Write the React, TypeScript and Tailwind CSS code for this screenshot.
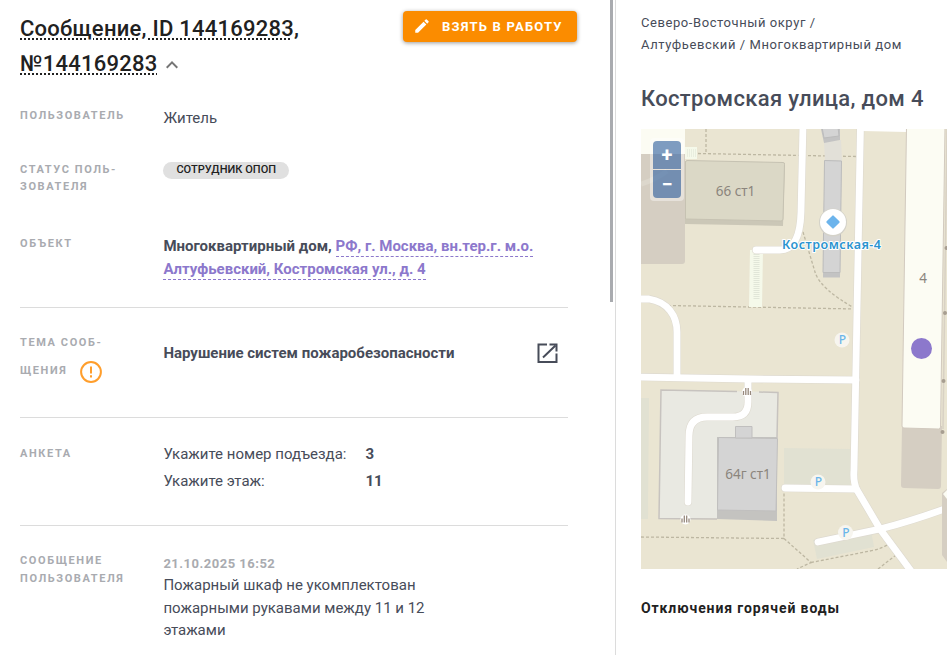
import React from 'react';
import { MdEdit, MdKeyboardArrowUp } from 'react-icons/md';

const Label: React.FC<{ className?: string; children: React.ReactNode }> = ({
  className = 'leading-[17.5px]',
  children,
}) => (
  <div
    className={`w-[143.4px] shrink-0 text-[11px] font-bold uppercase tracking-[1.6px] text-[#a9abb0] ${className}`}
  >
    {children}
  </div>
);

const WarningIcon: React.FC<{ className?: string }> = ({ className }) => (
  <svg viewBox="0 0 22 22" fill="none" stroke="currentColor" className={className}>
    <circle cx="11" cy="11" r="9.9" strokeWidth="2" />
    <path d="M11 5.5V12.5M11 14.2V16.4" strokeWidth="2" />
  </svg>
);

const OpenIcon: React.FC<{ className?: string }> = ({ className }) => (
  <svg viewBox="0 0 21 21" fill="none" stroke="currentColor" strokeWidth="2" className={className}>
    <path d="M10 1.5H1.5V19H19.5V10.5M6 14.5L18.5 2.5" />
    <path d="M12.5 1.5H19.5V8.5" />
  </svg>
);

const Parking: React.FC<{ x: number; y: number }> = ({ x, y }) => (
  <g>
    <circle cx={x} cy={y} r="7.5" fill="#f7f5ef" />
    <text x={x + 0.5} y={y + 4} textAnchor="middle" fontSize="12" fontWeight="500" fill="#6ab5ea">P</text>
  </g>
);

const Gate: React.FC<{ x: number; y: number }> = ({ x, y }) => (
  <g>
    <circle cx={x} cy={y} r="5" fill="#fff" />
    <path
      d={`M${x - 3.5} ${y - 1}v4M${x - 1.2} ${y - 4}v7M${x + 1.2} ${y - 4}v7M${x + 3.5} ${y - 1}v4`}
      stroke="#97897d"
      strokeWidth="1.3"
    />
  </g>
);

const roads = [
  'M803 125L801 212Q800 250 780 250H756',
  'M860.5 125L854 470Q853 482 857 490L880 529L914 575',
  'M636 299H649C668 302 677 316 677 332V377',
  'M636 377L750 379L856 380',
  'M748 380V402Q748 417 733 417H707Q689 417 689 436L688 502',
  'M785 488L856 489',
  'M818 542L880 529Q912 521 950 507',
];

const paths = [
  'M706 129V153',
  'M698 153.5L856 156.5',
  'M803 232L815 272Q820 289 856 309',
  'M668 305.5L856 309',
  'M641 537L784 538.5V492',
  'M784 538.5L811 562.5L797 569',
  'M811 562.5L870 551Q882 549 890 543',
  'M878 569L896 555',
];

const CityMap: React.FC = () => (
  <svg
    viewBox="641 129 306 440"
    className="block h-[440px] w-[306px]"
    fontFamily="'Noto Sans', sans-serif"
  >
    <rect x="641" y="129" width="306" height="440" fill="#eae5d2" />
    <rect x="641" y="129" width="44" height="26" fill="#fcfcf3" />
    <path d="M641 154H685V261Q685 264 682 264H641Z" fill="#d5cec2" />
    <path d="M641 184Q655 180 667 171" fill="none" stroke="#dcd7cc" strokeWidth="5" />
    <path d="M641 398H649L648 519H641Z" fill="#e1e1d2" />
    <path d="M784 448L850 449V487H784Z" fill="#e1e1d2" />
    <path d="M813 540L817 559L874 547L871 530Z" fill="#e1e1d2" />

    {/* fenced yard */}
    <path d="M661 390L778 392L776 519L659 518Z" fill="#e9e9e2" />
    <path
      d="M737 391.5L661 390L659 518.5L717 519M759 392L778 392.5L777 438"
      fill="none"
      stroke="#c7c3bf"
      strokeWidth="1.5"
    />

    {paths.map((d) => (
      <path key={d} d={d} fill="none" stroke="#bdb7a2" strokeWidth="1.3" strokeDasharray="3 2" />
    ))}

    {/* crossings */}
    <rect x="685" y="147" width="12" height="12" fill="#f5f9ea" />
    <path d="M687 153H696" stroke="#e9eedf" strokeWidth="8" strokeDasharray="1 1" />
    <path d="M750 250H763L762 307H749Z" fill="#f5f9ea" />
    <path d="M756.5 254V299" stroke="#e1e6d8" strokeWidth="6" strokeDasharray="1 1" />

    {roads.map((d) => (
      <path key={d} d={d} fill="none" stroke="#dedad0" strokeWidth="8" strokeLinecap="round" />
    ))}
    {roads.map((d) => (
      <path key={d} d={d} fill="none" stroke="#fff" strokeWidth="6.8" strokeLinecap="round" />
    ))}
    <path d="M862 129H907V132L862 131Z" fill="#fff" />

    {/* 66 st1 */}
    <path d="M685 161L784 163Q785 163 785 165L783 226L685 224Z" fill="#cbc7b7" />
    <path
      d="M687 160.5L783 162.5Q785 162.5 784.5 164.5L783 219Q783 221 781 221L685.5 219V162Q686 160.5 687 160.5Z"
      fill="#dbd8c6"
      stroke="#c6c2b2"
    />

    {/* garages along the road */}
    <path d="M824 142L841 140L842 161H825Z" fill="#e2e0d8" />
    <path d="M821 129H840V140L824 143Z" fill="#c3c3c3" />
    <path d="M822 127L838 127L839 136L824 138Z" fill="#d4d4d4" stroke="#bcbcbc" />
    <path d="M824.5 160.5L841.5 161L840 277.5H823Z" fill="#c3c3c3" />
    <path d="M824.5 160.5L841.5 161L840 272.5H823Z" fill="#d4d4d4" stroke="#bcbcbc" />

    {/* 64g st1 */}
    <path d="M717 437H777V521L717 519Z" fill="#c4c3c0" />
    <path d="M718.5 437.5L777.5 438.5L776 511L717.5 510Z" fill="#d4d4d4" stroke="#c0bfbe" />
    <path d="M735.5 426.5H752V438H735.5Z" fill="#d4d4d4" stroke="#c0bfbe" />

    {/* house 4 */}
    <path d="M902 426H942L941 486Q941 489 938 489L904 488Q901 488 901 485Z" fill="#d5cec2" />
    <path
      d="M906.5 127H945L940.5 427Q940.5 429 938.5 429L904 428Q902 428 902 426Z"
      fill="#fcfcf3"
      stroke="#d2cabf"
    />
    <path d="M947 129L943 429" stroke="#d8d1c4" strokeWidth="1.5" />
    <circle cx="946.5" cy="248" r="2" fill="#a79e91" />
    <circle cx="945" cy="313" r="2" fill="#a79e91" />
    <circle cx="943.5" cy="381" r="2" fill="#a79e91" />
    <circle cx="942.5" cy="432" r="2" fill="#a79e91" />
    <path d="M942 493V555L947 562V489Z" fill="#d5cec2" />
    <path d="M943 494L947 490V499Z" fill="#fcfcf3" />

    <Gate x={747} y={392} />
    <Gate x={685.5} y={519.5} />
    <Parking x={842} y={340} />
    <Parking x={818} y={482} />
    <Parking x={845.5} y={532.5} />

    <g fill="#8b857d" textAnchor="middle" fontSize="13.5">
      <text x="735.5" y="196">66 ст1</text>
      <text x="748" y="479">64г ст1</text>
      <text x="923" y="283">4</text>
    </g>

    <circle cx="833" cy="222.5" r="14" fill="#d4d2c9" />
    <circle cx="833" cy="222" r="13" fill="#fff" />
    <rect x="828" y="217" width="10" height="10" rx="1" fill="#6cb4ec" transform="rotate(45 833 222)" />
    <text
      x="831.5"
      y="249"
      textAnchor="middle"
      fontSize="12.5"
      fontWeight="600"
      textLength="99"
      fill="#2a93cf"
      stroke="#fff"
      strokeWidth="2"
      strokeLinejoin="round"
      paintOrder="stroke"
    >
      Костромская-4
    </text>
    <circle cx="921.5" cy="348.5" r="10.5" fill="#8c78cc" />
  </svg>
);

const answers = [
  { question: 'Укажите номер подъезда:', answer: '3' },
  { question: 'Укажите этаж:', answer: '11' },
];

export default function App() {
  return (
    <div className="flex h-[655px] w-[947px] overflow-hidden bg-white font-['Roboto',sans-serif] text-[15px] text-[#474c59]">
      <main className="w-[610px] shrink-0 pl-5">
        <header className="flex h-[80px] items-start pt-[11px]">
          <h1 className="w-[383px] text-[22px] font-medium leading-[35px] tracking-[0.25px] text-[#212121]">
            <span className="underline decoration-dotted decoration-2 underline-offset-2">
              Сообщение, ID 144169283,
              <br />
              №144169283
            </span>
            <MdKeyboardArrowUp className="ml-[3px] inline-block size-6 align-[-6px] text-[#757575]" />
          </h1>
          <button className="flex h-[31px] w-[174px] items-center rounded bg-[#fb8c00] pl-[10px] text-[13px] font-bold tracking-[1.2px] text-white shadow-[0_1px_4px_rgba(0,0,0,0.4)]">
            <MdEdit className="mb-[2px] mr-[11px] size-[18px]" />
            <span className="whitespace-nowrap">ВЗЯТЬ В РАБОТУ</span>
          </button>
        </header>

        <section className="w-[548px]">
          <div className="flex h-[65px]">
            <Label className="pt-[27px] leading-[17.5px]">Пользователь</Label>
            <div className="pt-[27px] leading-[22px]">Житель</div>
          </div>
          <div className="flex h-[70px] items-start">
            <Label className="pt-[16px] leading-[17px]">
              Статус поль-
              <br />
              зователя
            </Label>
            <div className="mt-[17px] h-[17px] rounded-full bg-[#e0e0e0] px-[13px] text-[11px] font-medium leading-[15px] tracking-[0.05px] text-[#212121]">
              СОТРУДНИК ОПОП
            </div>
          </div>
          <div className="flex h-[93px] border-b border-[#dcdcdc]">
            <Label className="pt-[20px] leading-[17.5px]">Объект</Label>
            <div className="pt-[20px] font-bold leading-[23px]">
              Многоквартирный дом,{' '}
              <a className="border-b border-dashed border-[#8c78cc] pb-px text-[#8c78cc]">
                РФ, г. Москва, вн.тер.г. м.о.
                <br />
                Алтуфьевский, Костромская ул., д. 4
              </a>
            </div>
          </div>
          <div className="flex h-[110px] border-b border-[#dcdcdc]">
            <Label className="pt-[21px] leading-[28px]">
              Тема сооб-
              <span className="flex items-center">
                щения
                <WarningIcon className="ml-[13px] mt-[2px] size-[22px] text-[#ff9e2c]" />
              </span>
            </Label>
            <div className="flex-1 pt-[34px] font-bold leading-[22px]">Нарушение систем пожаробезопасности</div>
            <OpenIcon className="mr-[10px] mt-[35px] size-[21px]" />
          </div>
          <div className="flex h-[108px] border-b border-[#dcdcdc]">
            <Label className="pt-[27px] leading-[17.5px]">Анкета</Label>
            <div className="pt-[23px] leading-[27px]">
              {answers.map((item) => (
                <div key={item.question} className="flex">
                  <span className="w-[202px]">{item.question}</span>
                  <b>{item.answer}</b>
                </div>
              ))}
            </div>
          </div>
          <div className="flex">
            <Label className="pt-[26px] leading-[17.5px]">
              Сообщение
              <br />
              пользователя
            </Label>
            <div className="w-[290px] pt-[27px]">
              <time className="block text-[13px] font-bold leading-[21px] tracking-[0.5px] text-[#a9abb0]">
                21.10.2025 16:52
              </time>
              <p className="leading-[22.5px]">
                Пожарный шкаф не укомплектован
                <br />
                пожарными рукавами между 11 и 12
                <br />
                этажами
              </p>
            </div>
          </div>
        </section>
      </main>

      <div className="h-[302px] w-[3px] shrink-0 bg-[#a9abaf]" />

      <aside className="ml-[2px] w-[332px] shrink-0 border-l border-[#dcdcdc] pl-[25px]">
        <nav className="whitespace-nowrap pt-[12px] text-[13px] leading-[22px] tracking-[0.57px]">
          Северо-Восточный округ /
          <br />
          Алтуфьевский / Многоквартирный дом
        </nav>
        <h2 className="mt-[28px] h-[45px] whitespace-nowrap text-[22px] font-medium leading-[30px] tracking-[0.33px]">
          Костромская улица, дом 4
        </h2>
        <div className="relative">
          <CityMap />
          <div className="absolute left-[9px] top-[9px] flex flex-col gap-px rounded bg-white/40 p-[3px] text-[20px] font-bold leading-none text-white">
            <button className="h-[28px] w-[28px] rounded-t-sm bg-[#003c88]/50">+</button>
            <button className="h-[28px] w-[28px] rounded-b-sm bg-[#003c88]/50">−</button>
          </div>
        </div>
        <h3 className="mt-[28px] text-[14px] font-bold leading-[22px] tracking-[0.9px] text-[#212121]">
          Отключения горячей воды
        </h3>
      </aside>
    </div>
  );
}
